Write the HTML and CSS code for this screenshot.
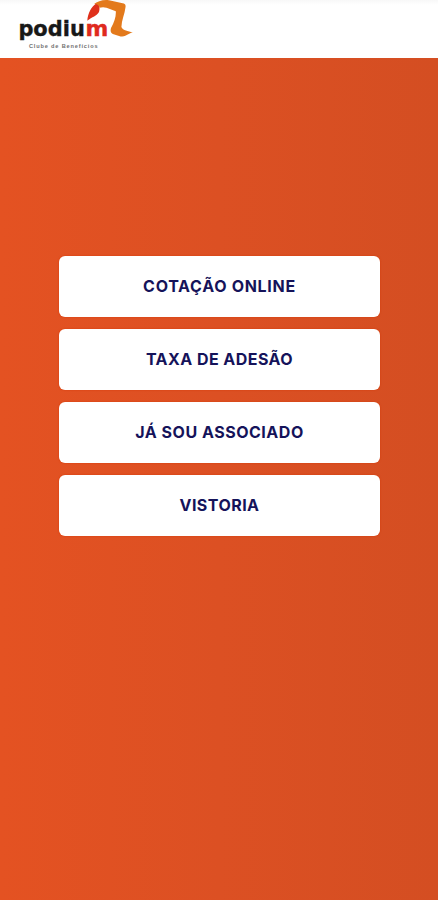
FILE: index.html
```html
<!DOCTYPE html>
<html lang="pt-BR">
<head>
<meta charset="utf-8">
<meta name="viewport" content="width=device-width, initial-scale=1">
<title>Podium</title>
<link rel="stylesheet" href="styles.css">
</head>
<body>
<header class="header">
  <svg class="logo" width="140" height="56" viewBox="0 0 140 56" role="img" aria-label="Podium Clube de Benefícios">
    <path fill="#df301b" d="M87.3 20.8 C87.8 13.5 91 6.5 97 3 C99.8 5 100 8.5 99 12 C97 16 92 16.8 87.3 20.8Z"/>
    <path fill="#e37a1c" d="M93.8 4.2 C97.5 1.2 103 -.6 109 .2 L123.8 3.6 C125.4 4.1 125.8 5.4 125.5 7.2 C124.8 14 121.6 20 121.4 27 C123 30.4 128 31.4 132.8 32.2 C128.5 33.6 125.2 36.6 120.6 36.6 L112.8 34 C110.6 33.2 110.2 30.5 111 28 C114.4 22.5 116.2 16 115.8 11.2 L106.5 7.8 C103.5 6.8 101.5 7.2 99.6 7.8 C98.8 5 97.2 3.8 93.8 4.2Z"/>
    <text class="logo-name" x="18.4" y="36.4" textLength="66.4" lengthAdjust="spacingAndGlyphs">podiu</text>
    <text class="logo-name logo-accent" x="85.6" y="36.4" textLength="22.8" lengthAdjust="spacingAndGlyphs">m</text>
    <text class="logo-tag" x="29" y="47.6" textLength="68.5">Clube de Benefícios</text>
  </svg>
</header>
<main class="menu">
  <a class="option option-quote">COTAÇÃO ONLINE</a>
  <a class="option option-fee">TAXA DE ADESÃO</a>
  <a class="option option-member">JÁ SOU ASSOCIADO</a>
  <a class="option option-survey">VISTORIA</a>
</main>
</body>
</html>
```
FILE: styles.css
```css
* { box-sizing: border-box; }

body {
  margin: 0;
  height: 900px;
  display: flex;
  flex-direction: column;
  overflow: hidden;
  font-family: Inter, "Liberation Sans", sans-serif;
}

.header {
  flex: none;
  height: 58px;
  background: linear-gradient(#f8f8f8, #fff 5px);
}

.logo { display: block; }

.logo-name {
  font: bold 21.5px "DejaVu Sans", sans-serif;
  fill: #181818;
  stroke: #181818;
  stroke-width: 0.4px;
}

.logo-accent { fill: #df2a1e; stroke: #df2a1e; }

.logo-tag {
  font: bold 5.6px "Liberation Sans", sans-serif;
  fill: #707070;
}

.menu {
  flex: 1;
  display: flex;
  flex-direction: column;
  gap: 12px;
  padding: 198px 58px 0 59px;
  background: linear-gradient(90deg, #e45222, #dc5023 50%, #d44e22);
}

.option {
  display: flex;
  align-items: center;
  justify-content: center;
  height: 61px;
  padding-bottom: 2px;
  border-radius: 6px;
  background: #fff;
  box-shadow: 0 0 2px #d33a08;
  color: #15135a;
  font-size: 16px;
  font-weight: 700;
  white-space: nowrap;
}

.option-quote { letter-spacing: 0.7px; }
.option-fee { letter-spacing: 0.45px; }
.option-member { letter-spacing: 0.52px; }
.option-survey { letter-spacing: 0.45px; }
```
